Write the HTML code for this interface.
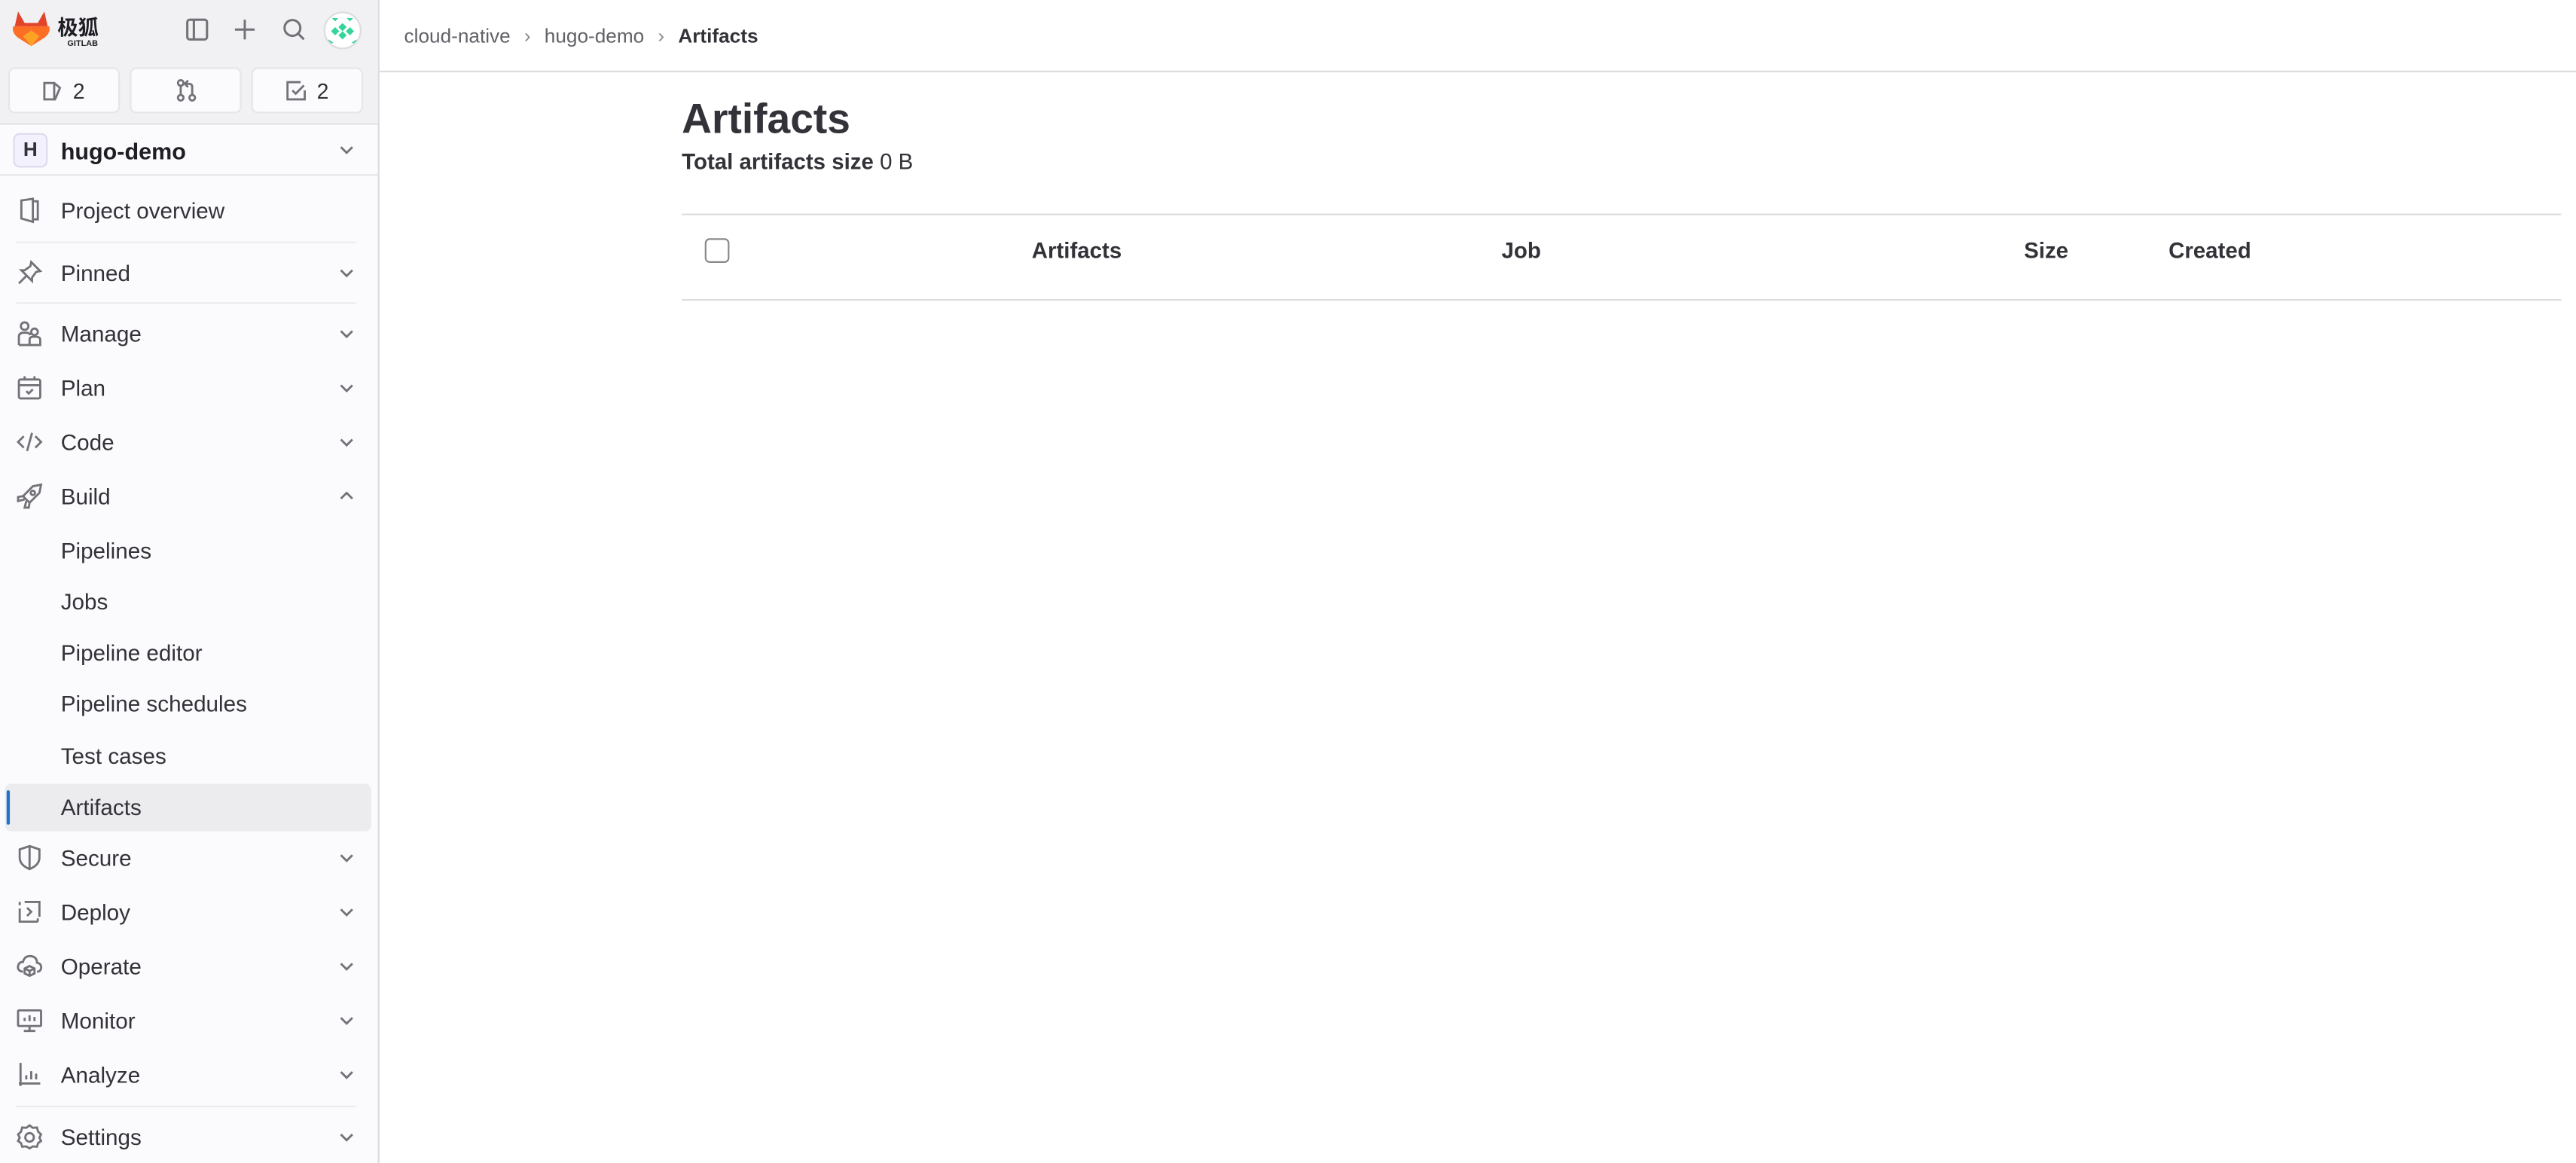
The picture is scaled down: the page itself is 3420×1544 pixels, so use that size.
<!DOCTYPE html>
<html><head><meta charset="utf-8">
<style>
html,body{margin:0;padding:0;width:3420px;height:1544px;overflow:hidden;background:#fff}
#s{position:absolute;left:0;top:0;width:1568px;height:708px;transform:scale(2.18112);transform-origin:0 0;font-family:"Liberation Sans","Noto Sans CJK SC",sans-serif;color:#333238}
.a{position:absolute}
.side{left:0;top:0;width:230px;height:708px;background:#fbfafd;border-right:1px solid #dcdcde}
.top{left:0;top:0;width:230px;height:75px;background:#f1f1f3;border-bottom:1px solid #e4e4e7}
.btn{top:41px;width:68px;height:28px;background:#fbfafd;border:1px solid #e6e6e9;border-radius:4px;box-sizing:border-box;font-size:13px;display:flex;align-items:center;justify-content:center;gap:6px}
.nav{left:37px;font-size:13.6px;line-height:16px;margin-top:-7px}
.ic{position:absolute;left:10px;width:16px;height:16px;margin-top:-8px}
.ch{position:absolute;left:206px;width:10px;height:10px;margin-top:-5px}
.sep{left:10px;width:207px;height:1px;background:#ececef}
svg{overflow:visible}
.th{top:145px;font-size:13.5px;font-weight:bold;line-height:16px}
</style></head><body><div id="s">
<div class="a side"></div>
<div class="a top"></div>
<!-- logo -->
<svg class="a" style="left:7px;top:6px" width="24" height="23" viewBox="0 0 24 23">
<path d="M2 10 L4 1 L8 8 L16 8 L20 1 L22 10 Z" fill="#e24329"/>
<path d="M1 10 L12 10 L12 22 L4 17 Q0 14 1 10Z" fill="#fc6d26"/>
<path d="M23 10 L12 10 L12 22 L20 17 Q24 14 23 10Z" fill="#fc6d26"/>
<path d="M7 16 L12 12.5 L17 16 L12 22Z" fill="#fca326"/>
</svg>
<div class="a" style="left:35px;top:9px;font-size:12.5px;font-weight:bold;color:#1f1e24;line-height:14px;font-family:'Noto Sans CJK SC',sans-serif">极狐</div>
<div class="a" style="left:41px;top:24px;font-size:5px;font-weight:bold;color:#1f1e24">GITLAB</div>
<!-- top icons -->
<svg class="a" style="left:113px;top:11px" width="14" height="14" viewBox="0 0 14 14" fill="none" stroke="#737278" stroke-width="1.4"><rect x="1" y="1" width="12" height="12" rx="1.5"/><line x1="5" y1="1" x2="5" y2="13"/></svg>
<svg class="a" style="left:143px;top:12px" width="12" height="12" viewBox="0 0 12 12" stroke="#737278" stroke-width="1.4"><line x1="6" y1="0" x2="6" y2="12"/><line x1="0" y1="6" x2="12" y2="6"/></svg>
<svg class="a" style="left:172px;top:11px" width="14" height="14" viewBox="0 0 14 14" fill="none" stroke="#737278" stroke-width="1.4"><circle cx="6" cy="6" r="4.8"/><line x1="9.5" y1="9.5" x2="13" y2="13"/></svg>
<div class="a" style="left:197px;top:7px;width:21px;height:21px;border-radius:50%;background:#fff;border:1px solid #dcdcde;overflow:hidden">
<svg width="21" height="21" viewBox="0 0 21 21" fill="#35d59a"><path d="M10.5 6 L13 8.5 L10.5 11 L8 8.5Z"/><path d="M10.5 11 L13 13.5 L10.5 16 L8 13.5Z"/><path d="M6 8.5 L8.5 11 L6 13.5 L3.5 11Z"/><path d="M15 8.5 L17.5 11 L15 13.5 L12.5 11Z"/><path d="M4 3 L8 3 L6 5Z"/><path d="M13 3 L17 3 L15 5Z"/><path d="M2 16 L5 18 L2 19Z"/><path d="M19 16 L16 18 L19 19Z"/></svg></div>
<!-- buttons -->
<div class="a btn" style="left:5px"><svg width="12" height="13" viewBox="0 0 12 13" fill="none" stroke="#737278" stroke-width="1.3"><path d="M1 1.5 h6 l3.5 3 l-3 7 h-6.5 z M7 1.5 v10"/></svg>2</div>
<div class="a btn" style="left:79px"><svg width="13" height="14" viewBox="0 0 13 14" fill="none" stroke="#737278" stroke-width="1.3"><circle cx="3" cy="2.5" r="1.7"/><circle cx="3" cy="11.5" r="1.7"/><circle cx="10" cy="11.5" r="1.7"/><line x1="3" y1="4.2" x2="3" y2="9.8"/><path d="M10 9.8 V5 Q10 3 8 3 H6 M7.5 1 L5.5 3 L7.5 5"/></svg></div>
<div class="a btn" style="left:153px"><svg width="13" height="13" viewBox="0 0 13 13" fill="none" stroke="#737278" stroke-width="1.3"><path d="M11.5 6 V11.5 H1 V1 H9"/><path d="M4 6 L6 8 L11 3"/></svg>2</div>
<!-- project -->
<div class="a" style="left:0;top:76px;width:230px;height:30px;border-bottom:1px solid #e4e4e7"></div>
<div class="a" style="left:8px;top:81px;width:21px;height:21px;box-sizing:border-box;border:1px solid #dcdcee;border-radius:4px;background:#f2f1fd;font-size:12px;font-weight:bold;text-align:center;line-height:19px">H</div>
<div class="a" style="left:37px;top:84px;font-size:14px;font-weight:bold;color:#1f1e24">hugo-demo</div>
<svg class="ch" style="top:91px" viewBox="0 0 10 10" fill="none" stroke="#737278" stroke-width="1.3"><path d="M1.5 3.5 L5 7 L8.5 3.5"/></svg>
<!-- nav -->
<div class="a nav" style="top:128px">Project overview</div>
<svg class="ic" style="top:128px" viewBox="0 0 16 16" fill="none" stroke="#737278" stroke-width="1.3"><path d="M3 2 L10 1 V15 L3 13 Z M10 2.5 H13 V13.5 H10"/></svg>
<div class="a sep" style="top:147px"></div>
<div class="a nav" style="top:166px">Pinned</div>
<svg class="ic" style="top:166px" viewBox="0 0 16 16" fill="none" stroke="#737278" stroke-width="1.3"><path d="M9 1.5 L14.5 7 L12 7.5 L9.5 11 L9.5 13 L3 6.5 L5 6.5 L8.5 4 Z M6 10 L1.5 14.5"/></svg>
<div class="a sep" style="top:184px"></div>
<div class="a" style="left:3px;top:477px;width:223px;height:29px;background:#ececef;border-radius:4px"></div>
<div class="a" style="left:3.7px;top:481px;width:2.6px;height:21px;background:#1f75cb;border-radius:2px"></div>
<div class="a nav" style="top:203px">Manage</div>
<svg class="ic" style="top:203px" viewBox="0 0 16 16" fill="none" stroke="#737278" stroke-width="1.3"><circle cx="5" cy="3.5" r="2.3"/><circle cx="11" cy="7" r="2"/><path d="M1.5 15 V10 Q1.5 7.5 4.5 7.5 H6 Q8 7.5 8.5 9 M8 15 V12 Q8 10 10 10 H12 Q14.5 10 14.5 12 V15 Z M1.5 15 H8"/></svg>
<div class="a nav" style="top:236px">Plan</div>
<svg class="ic" style="top:236px" viewBox="0 0 16 16" fill="none" stroke="#737278" stroke-width="1.3"><rect x="1.5" y="3" width="13" height="11.5" rx="1"/><line x1="1.5" y1="6.5" x2="14.5" y2="6.5"/><line x1="5" y1="1" x2="5" y2="3"/><line x1="11" y1="1" x2="11" y2="3"/><path d="M6 10 L7.5 11.5 L10 9"/></svg>
<div class="a nav" style="top:269px">Code</div>
<svg class="ic" style="top:269px" viewBox="0 0 16 16" fill="none" stroke="#737278" stroke-width="1.3"><path d="M4.5 4.5 L1 8 L4.5 11.5 M11.5 4.5 L15 8 L11.5 11.5 M9.5 2.5 L6.5 13.5"/></svg>
<div class="a nav" style="top:302px">Build</div>
<svg class="ic" style="top:302px" viewBox="0 0 16 16" fill="none" stroke="#737278" stroke-width="1.3"><path d="M15 1 L14 6 L8 12 L4 8 L10 2 Z M4 8 L1 8.5 L1 11 L5 10 M8 12 L7.5 15 L5 15 L6 11"/><circle cx="10" cy="6" r="1.3"/></svg>
<div class="a nav" style="top:335px">Pipelines</div>
<div class="a nav" style="top:366px">Jobs</div>
<div class="a nav" style="top:397px">Pipeline editor</div>
<div class="a nav" style="top:428px">Pipeline schedules</div>
<div class="a nav" style="top:460px">Test cases</div>
<div class="a nav" style="top:491px">Artifacts</div>
<div class="a nav" style="top:522px">Secure</div>
<svg class="ic" style="top:522px" viewBox="0 0 16 16" fill="none" stroke="#737278" stroke-width="1.3"><path d="M8 1 L14 3 V8 Q14 12.5 8 15 Q2 12.5 2 8 V3 Z M8 1 V15"/></svg>
<div class="a nav" style="top:555px">Deploy</div>
<svg class="ic" style="top:555px" viewBox="0 0 16 16" fill="none" stroke="#737278" stroke-width="1.3"><path d="M2 6 V14 H13 M5 2 H14 V11 M2 2 V4 M13 14 V12"/><path d="M6.5 5.5 L9 8 L6.5 10.5"/></svg>
<div class="a nav" style="top:588px">Operate</div>
<svg class="ic" style="top:588px" viewBox="0 0 16 16" fill="none" stroke="#737278" stroke-width="1.3"><path d="M4 11.5 Q0.5 11 1 8 Q1.5 5.5 4 5.5 Q5 1.5 9 2 Q12.5 2.5 12.5 6 Q15.5 6.5 15 9.5 Q14.5 11.5 12.5 11.5"/><path d="M8 8 L11 9.5 V12.5 L8 14 L5 12.5 V9.5 Z M5 9.5 L8 11 L11 9.5 M8 11 V14"/></svg>
<div class="a nav" style="top:621px">Monitor</div>
<svg class="ic" style="top:621px" viewBox="0 0 16 16" fill="none" stroke="#737278" stroke-width="1.3"><rect x="1" y="2" width="14" height="9.5" rx="0.5"/><path d="M8 11.5 V14 M4.5 14.5 H11.5 M5 6.5 V8.5 M8 5 V8.5 M11 6 V8.5"/></svg>
<div class="a nav" style="top:654px">Analyze</div>
<svg class="ic" style="top:654px" viewBox="0 0 16 16" fill="none" stroke="#737278" stroke-width="1.3"><path d="M2.5 1 V15 M1.5 13.5 H14.5 M6 8.5 V11 M9 6 V11 M12 7.5 V11"/></svg>
<div class="a sep" style="top:673px"></div>
<div class="a nav" style="top:692px">Settings</div>
<svg class="ic" style="top:692px" viewBox="0 0 16 16" fill="none" stroke="#737278" stroke-width="1.3"><path d="M8 1 L10 2.5 L12.5 2.3 L13.2 4.8 L15 6.5 L14 8.5 L15 10.5 L13.2 11.8 L12.5 14 L10 13.8 L8 15 L6 13.8 L3.5 14 L2.8 11.8 L1 10.5 L2 8.5 L1 6.5 L2.8 4.8 L3.5 2.3 L6 2.5 Z"/><circle cx="8" cy="8.3" r="2.6"/></svg>
<!-- chevrons -->
<svg class="ch" style="top:166px" viewBox="0 0 10 10" fill="none" stroke="#737278" stroke-width="1.3"><path d="M1.5 3.5 L5 7 L8.5 3.5"/></svg>
<svg class="ch" style="top:203px" viewBox="0 0 10 10" fill="none" stroke="#737278" stroke-width="1.3"><path d="M1.5 3.5 L5 7 L8.5 3.5"/></svg>
<svg class="ch" style="top:236px" viewBox="0 0 10 10" fill="none" stroke="#737278" stroke-width="1.3"><path d="M1.5 3.5 L5 7 L8.5 3.5"/></svg>
<svg class="ch" style="top:269px" viewBox="0 0 10 10" fill="none" stroke="#737278" stroke-width="1.3"><path d="M1.5 3.5 L5 7 L8.5 3.5"/></svg>
<svg class="ch" style="top:302px" viewBox="0 0 10 10" fill="none" stroke="#737278" stroke-width="1.3"><path d="M1.5 6.5 L5 3 L8.5 6.5"/></svg>
<svg class="ch" style="top:522px" viewBox="0 0 10 10" fill="none" stroke="#737278" stroke-width="1.3"><path d="M1.5 3.5 L5 7 L8.5 3.5"/></svg>
<svg class="ch" style="top:555px" viewBox="0 0 10 10" fill="none" stroke="#737278" stroke-width="1.3"><path d="M1.5 3.5 L5 7 L8.5 3.5"/></svg>
<svg class="ch" style="top:588px" viewBox="0 0 10 10" fill="none" stroke="#737278" stroke-width="1.3"><path d="M1.5 3.5 L5 7 L8.5 3.5"/></svg>
<svg class="ch" style="top:621px" viewBox="0 0 10 10" fill="none" stroke="#737278" stroke-width="1.3"><path d="M1.5 3.5 L5 7 L8.5 3.5"/></svg>
<svg class="ch" style="top:654px" viewBox="0 0 10 10" fill="none" stroke="#737278" stroke-width="1.3"><path d="M1.5 3.5 L5 7 L8.5 3.5"/></svg>
<svg class="ch" style="top:692px" viewBox="0 0 10 10" fill="none" stroke="#737278" stroke-width="1.3"><path d="M1.5 3.5 L5 7 L8.5 3.5"/></svg>
<!-- main -->
<div class="a" style="left:231px;top:43px;width:1337px;height:1px;background:#dcdcde"></div>
<div class="a" style="left:246px;top:14.5px;font-size:12px;color:#626168;line-height:15px">cloud-native <span style="margin:0 5px;color:#89888d">›</span> hugo-demo <span style="margin:0 5px;color:#89888d">›</span> <b style="color:#333238">Artifacts</b></div>
<div class="a" style="left:415px;top:57px;font-size:25.3px;font-weight:bold;line-height:32px;color:#333238">Artifacts</div>
<div class="a" style="left:415px;top:90.5px;font-size:13.5px;line-height:16px"><b>Total artifacts size</b> 0 B</div>
<div class="a" style="left:415px;top:130px;width:1144px;height:1px;background:#dcdcde"></div>
<div class="a" style="left:415px;top:182px;width:1144px;height:1px;background:#dcdcde"></div>
<div class="a" style="left:429px;top:145px;width:15px;height:15px;box-sizing:border-box;border:1px solid #89888d;border-radius:3px;background:#fff"></div>
<div class="a th" style="left:628px">Artifacts</div>
<div class="a th" style="left:914px">Job</div>
<div class="a th" style="left:1232px">Size</div>
<div class="a th" style="left:1320px">Created</div>
</div></body></html>
